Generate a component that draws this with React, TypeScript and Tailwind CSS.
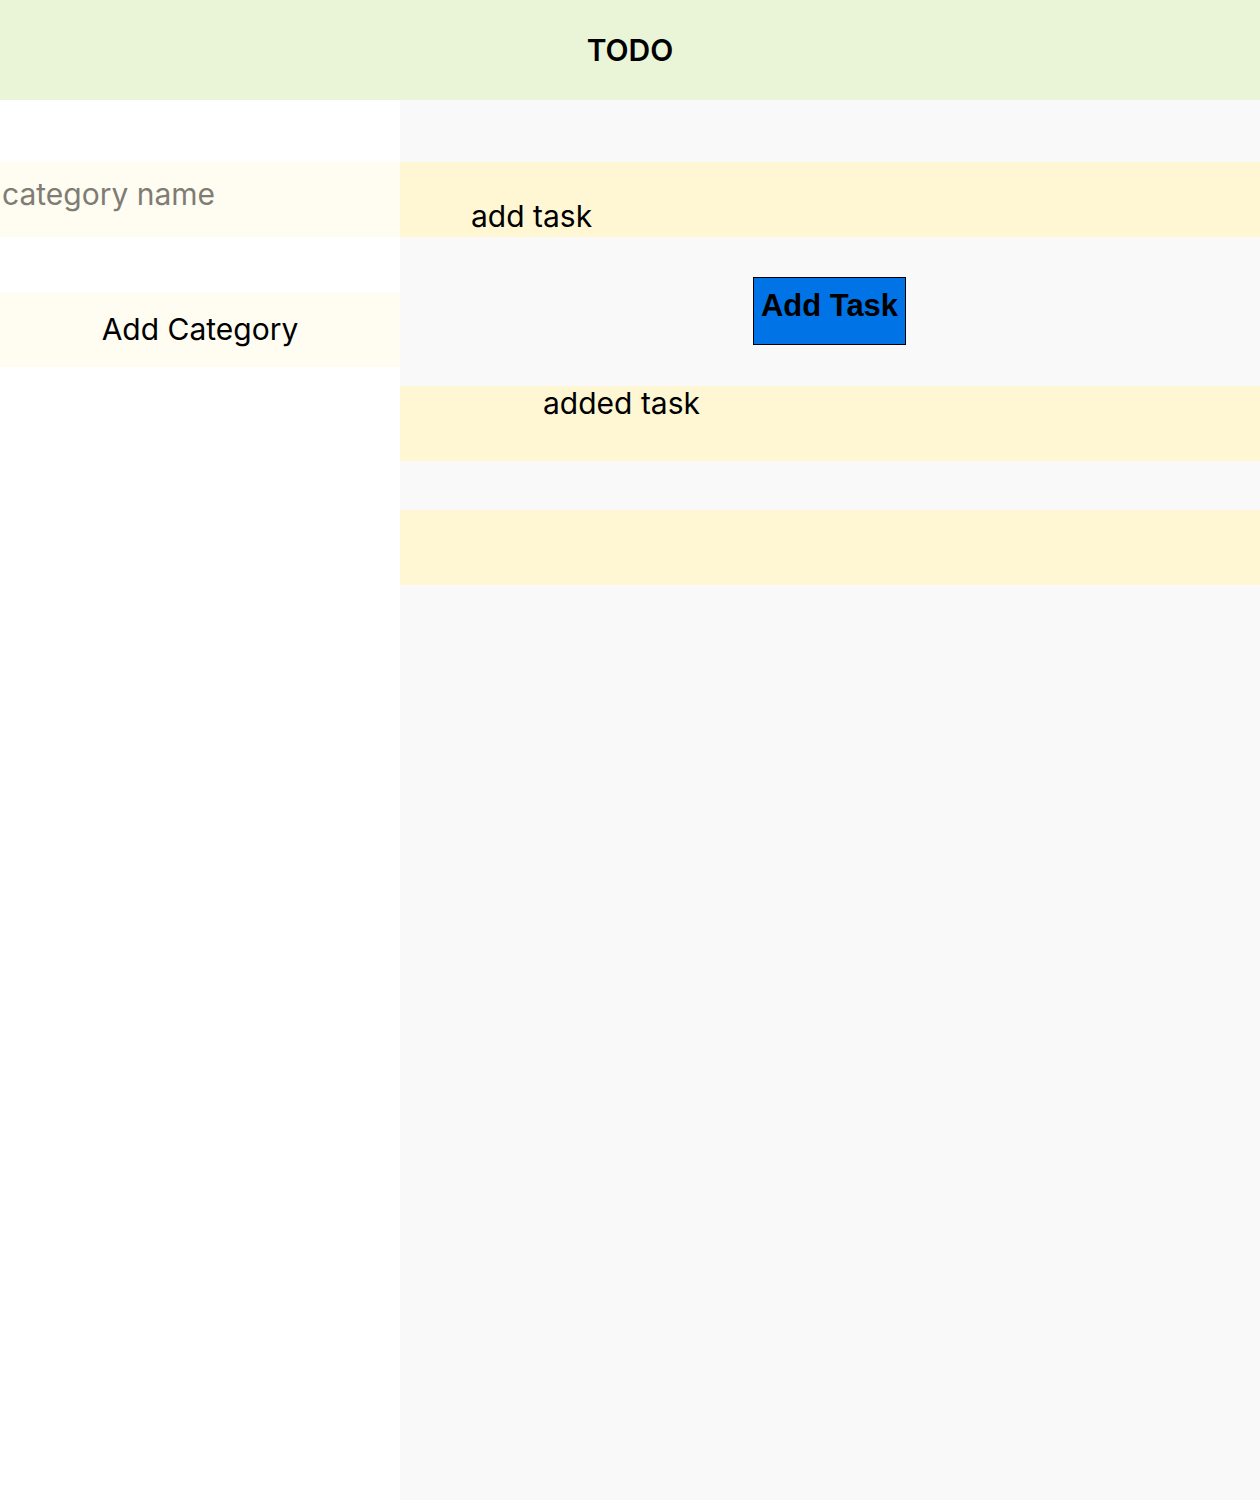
export default function App() {
  return (
    <div className="min-h-[1500px] flex flex-col bg-white" style={{ fontFamily: "Inter, 'Noto Sans', sans-serif" }}>
      <header className="h-[100px] bg-[#eaf5d7] flex items-center justify-center">
        <h1 className="text-[30px] font-semibold text-black">TODO</h1>
      </header>
      <div className="flex flex-1">
        <aside className="w-[400px] bg-white pt-[62px] flex flex-col gap-[55px]">
          <input
            className="h-[75px] bg-[#fffcf2] text-[30px] px-[2px] pb-[11px] outline-none placeholder:text-[#7f7c74]"
            placeholder="category name"
          />
          <button className="h-[75px] bg-[#fffcf2] text-[30px] text-black">Add Category</button>
        </aside>
        <main className="flex-1 bg-[#f9f9f9] pt-[62px] flex flex-col">
          <div className="h-[75px] bg-[#fff7d4] pl-[71px] pt-[36px] text-[30px] leading-[36px] text-black">add task</div>
          <div className="flex justify-center mt-[40px] pr-[1px]">
            <button
              className="w-[153px] h-[68px] bg-[#0073e6] border border-black text-[31px] font-bold text-black pb-[10px]"
              style={{ fontFamily: "'Liberation Sans', Arial, sans-serif" }}
            >
              Add Task
            </button>
          </div>
          <div className="h-[75px] mt-[41px] bg-[#fff7d4] pl-[143px] text-[30px] leading-[34px] text-black">added task</div>
          <div className="h-[75px] mt-[49px] bg-[#fff7d4]"></div>
        </main>
      </div>
    </div>
  );
}
